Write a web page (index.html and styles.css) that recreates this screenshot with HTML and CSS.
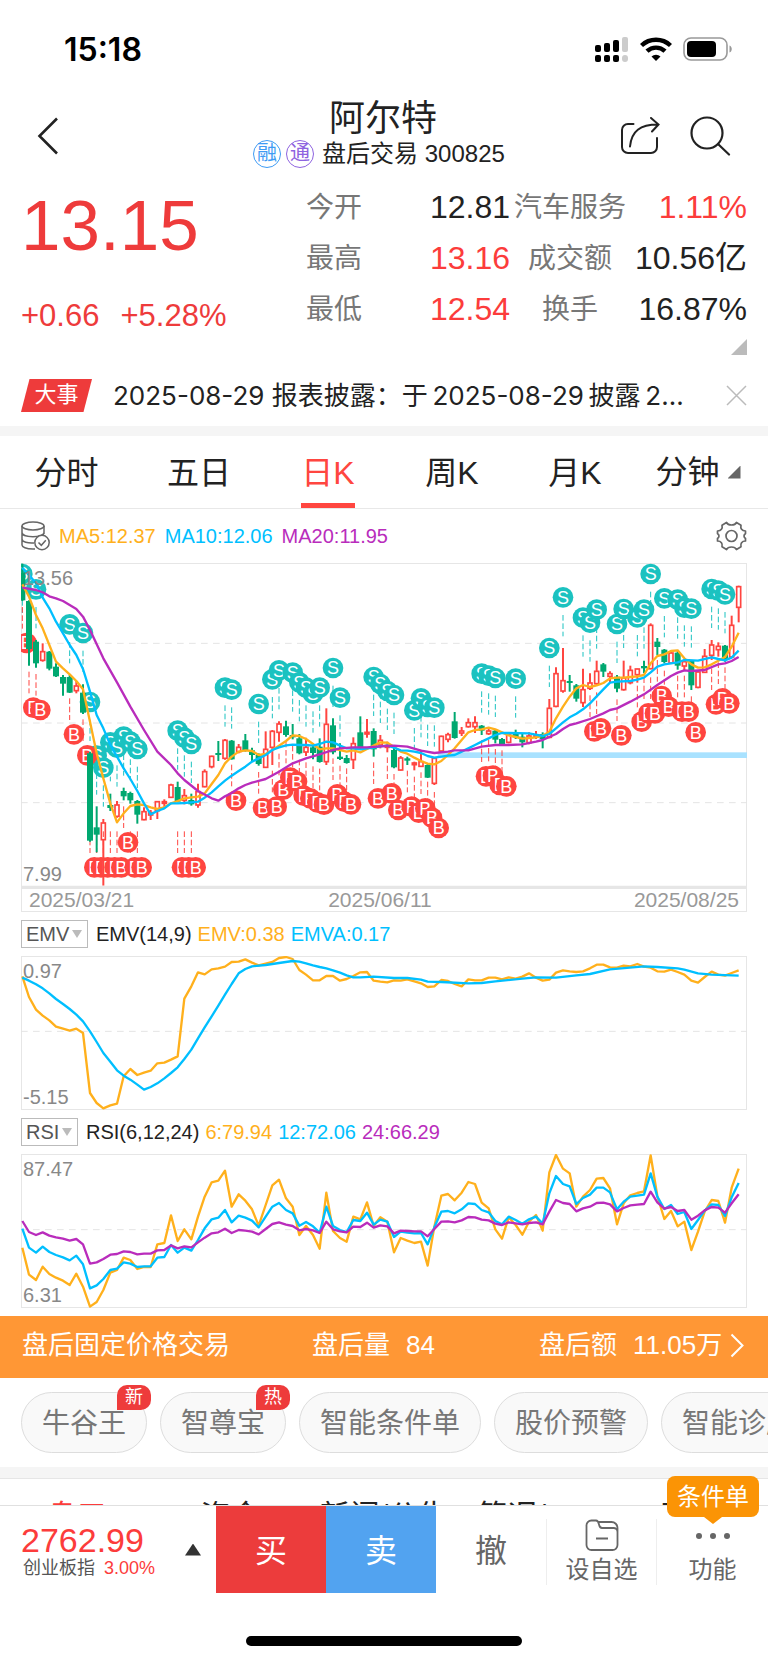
FILE: index.html
```
<!doctype html>
<html lang="zh-CN">
<head>
    <meta charset="utf-8">
    <meta name="viewport" content="width=device-width, initial-scale=1">
    <link rel="stylesheet" href="styles.css">
    <title>阿尔特 300825</title>
</head>
<body>
<div class="status">
    <span class="clock">15:18</span>
    <div class="status-icons">
        <svg width="34" height="25" viewBox="0 0 34 25">
            <rect x="0" y="8" width="6" height="7" rx="2"/>
            <rect x="9" y="6" width="6" height="9" rx="2"/>
            <rect x="18" y="3" width="6" height="12" rx="2"/>
            <rect x="27" y="0" width="6" height="15" rx="2" fill="#ccc"/>
            <rect x="0" y="18" width="6" height="7" rx="2"/>
            <rect x="9" y="18" width="6" height="7" rx="2"/>
            <rect x="18" y="18" width="6" height="7" rx="2"/>
            <rect x="27" y="18" width="6" height="7" rx="3" fill="#ccc"/>
        </svg>
        <svg width="32" height="24" viewBox="0 0 32 24">
            <path d="M1.500 8.500a21 21 0 0 1 29 0M7 14.200a13 13 0 0 1 18 0" fill="none" stroke="#000" stroke-width="4.400"/>
            <path d="M16 24l-4.500-4.500a6.500 6.500 0 0 1 9 0z"/>
        </svg>
        <svg width="50" height="24" viewBox="0 0 50 24">
            <rect x="1" y="1" width="43" height="22" rx="7" fill="none" stroke="#999" stroke-width="1.600"/>
            <rect x="4" y="4" width="29" height="16" rx="4"/>
            <path d="M46.500 8.500c3 1 3 6 0 7z" fill="#999"/>
        </svg>
    </div>
</div>

<header class="header">
    <button type="button" class="icon-btn" aria-label="返回">
        <svg width="22" height="38" viewBox="0 0 22 38"><path d="M20 1.500L2.500 19 20 36.500" fill="none" stroke="#222" stroke-width="2.600"/></svg>
    </button>
    <div class="heading">
        <h1 class="name">阿尔特</h1>
        <p class="sub">
            <span class="mark mark-blue">融</span>
            <span class="mark mark-purple">通</span>
            <span class="session">盘后交易 300825</span>
        </p>
    </div>
    <div class="actions">
        <button type="button" class="icon-btn" aria-label="分享">
            <svg width="40" height="38" viewBox="0 0 40 38" fill="none" stroke="#222" stroke-width="2" stroke-linecap="round">
                <path d="M13.500 7H8a6 6 0 0 0-6 6v17a6 6 0 0 0 6 6h23a6 6 0 0 0 6-6v-9M10 29.500C11.500 14 20 7.500 38 7.500M31 1l7.500 6.500L32 14.500"/>
            </svg>
        </button>
        <button type="button" class="icon-btn" aria-label="搜索">
            <svg width="41" height="40" viewBox="0 0 41 40" fill="none" stroke="#222" stroke-width="2.200" stroke-linecap="round">
                <circle cx="17" cy="17" r="15.500"/><path d="M28 28l11 10.500"/>
            </svg>
        </button>
    </div>
</header>

<section class="quote">
    <div class="price">
        <strong class="last">13.15</strong>
        <p class="change"><span>+0.66</span><span>+5.28%</span></p>
    </div>
    <table class="stats">
        <tr><th>今开</th><td>12.81</td><th>汽车服务</th><td class="up">1.11%</td></tr>
        <tr><th>最高</th><td class="up">13.16</td><th>成交额</th><td>10.56亿</td></tr>
        <tr><th>最低</th><td class="up">12.54</td><th>换手</th><td>16.87%</td></tr>
    </table>
    <i class="more"></i>
</section>

<div class="news">
    <span class="news-tag">大事</span>
    <a class="news-text" href="#">2025-08-29 报表披露：于&thinsp;2025-08-29&thinsp;披露&thinsp;2...</a>
    <button type="button" class="icon-btn" aria-label="关闭">
        <svg width="21" height="21" viewBox="0 0 21 21"><path d="M1 1l19 19M20 1L1 20" stroke="#bbb" stroke-width="1.500"/></svg>
    </button>
</div>

<nav class="tabs">
    <a href="#">分时</a>
    <a href="#">五日</a>
    <a href="#" class="active">日K</a>
    <a href="#">周K</a>
    <a href="#">月K</a>
    <a href="#" class="with-arrow">分钟<i class="corner"></i></a>
</nav>

<main class="charts">
    <div class="legend legend-main">
        <svg class="db" width="29" height="30" viewBox="0 0 29 30" fill="none" stroke="#666" stroke-width="1.500">
            <ellipse cx="12" cy="5" rx="11" ry="4"/>
            <path d="M1 5v19c0 2 4 4 11 4h2M23 5v8M1 11.500c0 5.500 22 5.500 22 0M1 18c0 3 6 4.500 12 4M23 5v6"/>
            <circle cx="21" cy="21.500" r="7.200" fill="#fff"/>
            <path d="M17.500 21.500l2.800 2.800 4.500-5"/>
        </svg>
        <span class="c-yellow">MA5:12.37</span>
        <span class="c-blue">MA10:12.06</span>
        <span class="c-purple">MA20:11.95</span>
        <button type="button" class="icon-btn gear" aria-label="设置">
            <svg width="31" height="30" viewBox="0 0 31 30" fill="none" stroke="#666" stroke-width="1.700" stroke-linejoin="round">
                <path d="M10.500 1.500c1 2 2.500 2.500 5 2.500s4-.5 5-2.500l4.500 2.700c-.8 3.300.8 5.800 4.500 5.800v2.500c-2 1.500-2 3.500 0 5V20c-3.700 0-5.300 2.500-4.500 5.800l-4.500 2.700c-1-2-2.500-2.500-5-2.500s-4 .5-5 2.500L6 25.800C6.800 22.500 5.200 20 1.500 20v-2.500c2-1.500 2-3.500 0-5V10C5.200 10 6.800 7.500 6 4.200z"/>
                <circle cx="15.500" cy="15" r="5.500"/>
            </svg>
        </button>
    </div>
    <div class="plot">
        <svg id="kline" viewBox="0 24 2178 972"></svg>
        <span class="scale scale-top">13.56</span>
        <span class="scale scale-bottom">7.99</span>
    </div>
    <div class="dates"><span>2025/03/21</span><span>2025/06/11</span><span>2025/08/25</span></div>

    <div class="legend">
        <span class="picker">
            <select aria-label="指标一"><option>EMV</option></select>
            <i class="caret"></i>
        </span>
        <span>EMV(14,9)</span>
        <span class="c-yellow">EMV:0.38</span>
        <span class="c-blue">EMVA:0.17</span>
    </div>
    <div class="plot">
        <svg id="emv" viewBox="0 229 2178 462"></svg>
        <span class="scale scale-top">0.97</span>
        <span class="scale scale-bottom">-5.15</span>
    </div>

    <div class="legend">
        <span class="picker">
            <select aria-label="指标二"><option>RSI</option></select>
            <i class="caret"></i>
        </span>
        <span>RSI(6,12,24)</span>
        <span class="c-yellow">6:79.94</span>
        <span class="c-blue">12:72.06</span>
        <span class="c-purple">24:66.29</span>
    </div>
    <div class="plot">
        <svg id="rsi" viewBox="0 132 2178 462"></svg>
        <span class="scale scale-top">87.47</span>
        <span class="scale scale-bottom">6.31</span>
    </div>
</main>

<a class="after-hours" href="#">
    <span>盘后固定价格交易</span>
    <span class="pair"><span>盘后量</span><span>84</span></span>
    <span class="pair"><span>盘后额</span><span>11.05万</span>
        <svg width="14" height="25" viewBox="0 0 14 25"><path d="M1.500 1.500l11 11-11 11" fill="none" stroke="#fff" stroke-width="2"/></svg>
    </span>
</a>

<div class="chips">
    <button type="button" class="chip">牛谷王<span class="flag">新</span></button>
    <button type="button" class="chip">智尊宝<span class="flag">热</span></button>
    <button type="button" class="chip">智能条件单</button>
    <button type="button" class="chip">股价预警</button>
    <button type="button" class="chip">智能诊股</button>
</div>

<nav class="info-tabs">
    <a href="#" class="active">盘口</a>
    <a href="#">资金</a>
    <a href="#">新闻/公告</a>
    <a href="#">简况/F10</a>
    <a href="#">研报</a>
</nav>

<footer class="dock">
    <div class="index">
        <div>
            <strong class="index-value">2762.99</strong>
            <p class="index-name">创业板指 <span class="up">3.00%</span></p>
        </div>
        <i class="index-arrow"></i>
    </div>
    <button type="button" class="trade buy">买</button>
    <button type="button" class="trade sell">卖</button>
    <button type="button" class="trade cancel">撤</button>
    <button type="button" class="tool">
        <svg width="34" height="33" viewBox="0 0 34 33" fill="none" stroke="#666" stroke-width="1.800">
            <path d="M1.500 7v19a5 5 0 0 0 5 5h21a5 5 0 0 0 5-5V13a4 4 0 0 0-4-4H17c-2 0-2.500-1-3-3.500S13 1.500 11 1.500H6.500a5 5 0 0 0-5 5.500zM13 3h13.500a6 6 0 0 1 6 6v5M11 19.500h12"/>
        </svg>
        <span>设自选</span>
    </button>
    <button type="button" class="tool">
        <svg width="36" height="33" viewBox="0 0 36 33" fill="#666">
            <circle cx="4" cy="17" r="3"/><circle cx="18" cy="17" r="3"/><circle cx="32" cy="17" r="3"/>
        </svg>
        <span>功能</span>
        <span class="tip">条件单</span>
    </button>
</footer>
<div class="home"></div>
<script src="chart.js"></script>
</body>
</html>
```
FILE: styles.css
```
* {
    box-sizing: border-box;
}

body {
    margin: 0;
    background-color: #fff;
    color: #222;
    font-family: "Liberation Sans", "Noto Sans CJK SC", sans-serif;
    font-size: 20px;
    overflow-x: hidden;
}

h1, p {
    margin: 0;
    font-weight: inherit;
}

a {
    color: inherit;
    text-decoration: none;
}

button, select {
    font: inherit;
    color: inherit;
    border: none;
    background: none;
    padding: 0;
    margin: 0;
}

svg {
    display: block;
    flex: none;
}

.up {
    color: #fc3c3b;
}

.c-yellow {
    color: #ffb01c;
}

.c-blue {
    color: #00bfff;
}

.c-purple {
    color: #b92cbc;
}

/* status bar */

.status {
    display: flex;
    justify-content: space-between;
    align-items: center;
    height: 96px;
    padding: 2px 35px 0 64px;
}

.clock {
    font-family: Inter, sans-serif;
    font-size: 32px;
    font-weight: 600;
    color: #000;
}

.status-icons {
    display: flex;
    align-items: center;
    gap: 11px;
}

/* header */

.header {
    display: grid;
    grid-template-columns: 1fr auto 1fr;
    align-items: center;
    height: 80px;
    padding: 0 37px;
}

.icon-btn {
    display: block;
}

.heading {
    display: flex;
    flex-direction: column;
    align-items: center;
    margin-right: 10px;
}

.name {
    padding-left: 8px;
    font-size: 36px;
    line-height: 38px;
}

.sub {
    display: flex;
    align-items: center;
    gap: 5px;
    height: 34px;
    padding-bottom: 2px;
    font-size: 24px;
    line-height: 32px;
}

.mark {
    width: 28px;
    height: 28px;
    border: 1px solid;
    border-radius: 14px;
    font-size: 20px;
    line-height: 25px;
    text-align: center;
}

.mark-blue {
    color: #3e9bf4;
}

.mark-purple {
    color: #8e63e0;
}

.session {
    margin-left: 3px;
}

.actions {
    display: flex;
    align-items: center;
    justify-content: flex-end;
    gap: 30px;
}

/* quote */

.quote {
    position: relative;
    display: flex;
    justify-content: space-between;
    height: 190px;
    padding: 6px 21px 0;
}

.last {
    display: block;
    padding-top: 4px;
    font-size: 71px;
    font-weight: 400;
    line-height: 80px;
    color: #ee3b3b;
}

.change {
    display: flex;
    gap: 21px;
    padding-top: 33px;
    font-size: 31px;
    line-height: 34px;
    color: #ee3b3b;
}

.stats {
    width: 441px;
    height: 153px;
    border-collapse: collapse;
    table-layout: fixed;
}

.stats th, .stats td {
    padding: 0;
    height: 51px;
    line-height: 51px;
    white-space: nowrap;
}

.stats th {
    width: 120px;
    font-size: 28px;
    font-weight: 400;
    color: #777;
}

.stats th:first-child {
    width: 110px;
    text-align: left;
}

.stats td {
    font-size: 32px;
    text-align: right;
}

.stats td:nth-child(2) {
    width: 94px;
}

.more {
    position: absolute;
    right: 21px;
    bottom: 11px;
    width: 16px;
    height: 16px;
    background-color: #bbb;
    clip-path: polygon(100% 0, 100% 100%, 0 100%);
}

/* news */

.news {
    display: flex;
    align-items: center;
    height: 70px;
    padding: 0 21px 1px;
    border-bottom: 10px solid #f5f5f5;
}

.news-tag {
    flex: none;
    width: 71px;
    height: 33px;
    background-color: #ee3b3b;
    clip-path: polygon(12% 0, 100% 0, 88% 100%, 0 100%);
    color: #fff;
    font-size: 22px;
    line-height: 32px;
    text-align: center;
}

.news-text {
    flex: 1;
    margin: 0 22px 0 21px;
    font-family: Inter, "Noto Sans CJK SC", sans-serif;
    font-size: 26px;
    line-height: 36px;
    overflow: hidden;
    white-space: nowrap;
}

/* period tabs */

.tabs {
    display: grid;
    grid-template-columns: 133fr 132fr 126fr 122fr 124fr 131fr;
    justify-items: center;
    height: 73px;
    border-bottom: 1px solid #e8e8e8;
    font-size: 32px;
    line-height: 74px;
}

.tabs a {
    height: 72px;
}

.tabs .active {
    color: #ff4640;
    box-shadow: inset 0 -5px #ff4640;
}

.with-arrow {
    display: flex;
    align-items: center;
    gap: 8px;
    padding-right: 9px;
}

.corner {
    width: 13px;
    height: 13px;
    background-color: #666;
    clip-path: polygon(100% 0, 100% 100%, 0 100%);
}

/* charts */

.charts {
    padding: 0 21px 8px;
}

.legend {
    display: flex;
    align-items: center;
    gap: 6px;
    height: 44px;
    line-height: 24px;
}

.legend-main {
    gap: 9px;
    height: 54px;
}

.gear {
    margin-left: auto;
}

.plot {
    position: relative;
    box-shadow: inset 0 0 0 1px #e6e6e6;
}

.plot svg {
    width: 100%;
    height: auto;
}

.scale {
    position: absolute;
    left: 2px;
    color: #888;
    line-height: 24px;
}

.scale-top {
    top: 3px;
}

.scale-bottom {
    bottom: 1px;
}

.dates {
    display: grid;
    grid-template-columns: 300fr 112fr 300fr;
    padding: 0 7px;
    border: 1px solid #e6e6e6;
    border-top-width: 2px;
    font-size: 21px;
    line-height: 22px;
    color: #999;
}

.dates span:last-child {
    text-align: right;
}

.picker {
    position: relative;
    margin-right: 2px;
    border: 1px solid #bbb;
    color: #555;
}

.picker select {
    display: block;
    appearance: none;
    height: 26px;
    padding: 0 17px 0 4px;
    line-height: 26px;
}

.caret {
    position: absolute;
    right: 5px;
    top: 9px;
    width: 10px;
    height: 8px;
    background-color: #bbb;
    clip-path: polygon(0 0, 100% 0, 50% 100%);
    pointer-events: none;
}

.line {
    fill: none;
    stroke-width: 7;
    stroke-linejoin: round;
}

.grid-line {
    stroke: #e4e4e4;
    stroke-width: 3;
    stroke-dasharray: 20 16;
}

.letter {
    fill: #fff;
    font-size: 54px;
    text-anchor: middle;
}

/* after-hours bar */

.after-hours {
    display: grid;
    grid-template-columns: 290fr 227fr 208fr;
    align-items: center;
    height: 62px;
    padding: 0 21px 4px 22px;
    background-color: #ff9735;
    color: #fff;
    font-size: 26px;
    line-height: 36px;
    white-space: nowrap;
}

.pair {
    display: flex;
    align-items: center;
    gap: 16px;
}

.pair svg {
    margin-left: -8px;
}

/* chips */

.chips {
    display: flex;
    gap: 13px;
    padding: 14px 21px;
    border-bottom: 11px solid #f5f5f5;
    overflow: hidden;
}

.chip {
    position: relative;
    flex: none;
    height: 61px;
    padding: 0 20px 3px;
    border: 1px solid #ddd;
    border-radius: 31px;
    background-color: #f9f9f9;
    color: #777;
    font-size: 28px;
}

.flag {
    position: absolute;
    top: -8px;
    right: -5px;
    width: 34px;
    height: 25px;
    border-radius: 10px 10px 10px 0;
    background-color: #ee3b3b;
    color: #fff;
    font-size: 18px;
    line-height: 25px;
}

/* lower tab strip, cut off by the dock */

.info-tabs {
    display: grid;
    grid-template-columns: repeat(5, 1fr);
    justify-items: center;
    height: 27px;
    padding-top: 19px;
    border-top: 1px solid #e6e6e6;
    overflow: hidden;
    font-size: 30px;
    line-height: 36px;
    white-space: nowrap;
}

.info-tabs .active {
    color: #fc3c3b;
}

/* dock */

.dock {
    display: grid;
    grid-template-columns: 216fr 110fr 110fr 110fr 110fr 112fr;
    height: 88px;
    border-top: 1px solid #e0e0e0;
}

.index {
    display: flex;
    justify-content: space-between;
    align-items: center;
    padding: 0 15px 0 21px;
}

.index-value {
    display: block;
    padding-top: 2px;
    font-size: 34px;
    font-weight: 400;
    line-height: 34px;
    color: #fc3c3b;
}

.index-name {
    padding-left: 2px;
    font-size: 18px;
    line-height: 22px;
    color: #555;
}

.index-name .up {
    margin-left: 4px;
}

.index-arrow {
    width: 16px;
    height: 12px;
    background-color: #333;
    clip-path: polygon(50% 0, 100% 100%, 0 100%);
}

.trade {
    padding-bottom: 4px;
    font-size: 32px;
}

.buy {
    background-color: #ec3c3c;
    color: #fff;
}

.sell {
    background-color: #52a3f0;
    color: #fff;
}

.cancel {
    color: #666;
}

.tool {
    position: relative;
    display: flex;
    flex-direction: column;
    align-items: center;
    gap: 4px;
    margin: 13px 0 8px;
    border-left: 1px solid #eee;
    color: #666;
    font-size: 24px;
    line-height: 28px;
}

.tip {
    position: absolute;
    top: -43px;
    right: 9px;
    padding: 0 10px;
    border-radius: 8px;
    background-color: #fb9405;
    color: #fff;
    line-height: 41px;
    white-space: nowrap;
}

.tip::after {
    content: "";
    position: absolute;
    left: 50%;
    top: 100%;
    margin-left: -9px;
    border: 9px solid transparent;
    border-top: 7px solid #fb9405;
    border-bottom: none;
}

.home {
    width: 36%;
    height: 10px;
    margin: 43px auto 17px;
    border-radius: 5px;
    background-color: #000;
}
```
FILE: chart.js
```
const STEP = 20.27;
const X0 = 4;
const COLORS = { yellow: '#ffb01c', blue: '#00bfff', purple: '#b92cbc', up: '#ff4540', down: '#00a870', sell: '#1bc2c0' };

// high, body top, body bottom, low, direction (1 up, 0 down)
const candles = [
    [26,52,136,138,0],[136,138,282,332,0],[255,260,325,338,0],[265,290,316,320,1],[288,290,341,346,0],
    [325,335,364,366,0],[360,366,386,422,0],[360,366,413,414,0],[378,393,407,415,1],[388,413,473,477,0],
    [590,595,857,860,0],[754,817,839,892,0],[792,804,854,992,1],[716,750,759,768,0],[738,750,784,788,1],
    [698,708,724,736,0],[710,714,736,746,0],[735,738,779,806,0],[757,770,794,796,1],[765,773,780,795,1],
    [738,740,767,792,1],[733,740,745,758,1],[686,690,727,729,1],[680,696,740,742,0],[702,722,736,748,1],
    [716,735,748,752,0],[686,710,750,758,1],[643,650,695,697,1],[602,604,635,640,1],[558,594,600,618,0],
    [552,556,610,614,1],[555,557,613,614,0],[567,577,590,595,1],[537,556,586,590,0],[578,586,600,618,0],
    [595,600,627,632,0],[529,583,637,638,1],[525,529,577,630,1],[499,507,532,560,1],[497,514,540,545,0],
    [507,540,547,553,0],[537,550,595,598,0],[548,577,591,603,1],[565,577,594,613,0],[550,575,621,623,0],
    [460,508,620,630,1],[490,511,592,598,0],[565,605,612,615,0],[600,609,624,626,0],[547,566,614,642,1],
    [484,532,582,585,0],[492,532,537,548,1],[520,528,583,605,0],[540,556,570,580,1],[560,571,577,592,1],
    [578,585,637,640,0],[603,609,645,647,1],[605,610,617,630,0],[620,624,629,646,1],[584,620,634,636,1],
    [625,630,668,669,0],[608,610,685,690,1],[542,544,588,590,1],[533,539,553,562,1],[471,499,549,551,0],
    [516,528,534,543,1],[490,503,515,518,1],[484,503,515,534,1],[510,512,527,540,0],[520,528,536,540,1],
    [522,527,554,565,0],[549,552,567,570,0],[538,540,562,565,1],[524,534,547,552,0],[535,545,562,577,0],
    [532,543,563,568,1],[528,540,546,552,1],[532,537,552,580,0],[432,460,547,550,1],[337,356,454,457,1],
    [279,377,408,413,1],[360,378,384,410,0],[387,391,431,440,0],[341,404,443,456,1],[355,384,400,405,1],
    [317,349,386,390,1],[324,328,350,366,0],[349,356,364,384,1],[360,365,401,412,0],[317,369,404,407,1],
    [332,346,383,388,1],[341,342,359,383,1],[317,333,340,355,0],[205,211,341,343,1],[249,260,276,300,0],
    [282,284,321,325,0],[286,294,324,327,1],[288,293,332,344,0],[312,320,333,346,1],[315,318,391,405,0],
    [345,351,397,400,1],[282,304,352,354,1],[255,270,301,315,1],[262,274,284,305,1],[270,272,314,320,0],
    [182,211,306,308,1],[92,95,157,202,1]
];

// index, y
const sells = [
    [0,57],[2,103],[7,208],[9,234],[10,441],[13,562],[14,578],[11,602],[12,638],[15,545],[16,560],[17,582],
    [23,527],[24,548],[25,567],[30,398],[31,404],[35,447],[37,373],[38,346],[40,353],[41,382],[42,398],
    [43,416],[44,398],[46,339],[47,428],[52,366],[53,387],[54,408],[55,420],[58,466],[59,430],[60,456],
    [61,458],[68,356],[69,362],[70,369],[73,371],[78,279],[80,127],[83,188],[84,203],[85,164],[88,207],
    [89,162],[91,187],[92,164],[93,57],[95,130],[97,134],[98,158],[99,161],[102,102],[103,107],[104,118]
];
const buys = [
    [0,264],[1,458],[2,465],[7,538],[9,601],[10,937],[11,937],[12,937],[13,937],[14,937],[15,862],[16,937],
    [17,937],[23,937],[24,937],[25,937],[31,737],[35,759],[37,755],[38,704],[39,668],[40,680],[41,722],
    [42,730],[43,742],[44,749],[46,718],[47,740],[48,748],[52,730],[54,715],[55,765],[57,755],[58,773],
    [59,760],[60,788],[61,819],[68,664],[69,662],[70,690],[71,694],[84,529],[85,520],[88,541],[91,500],
    [92,475],[93,475],[94,423],[95,455],[97,470],[98,470],[99,532],[102,448],[103,430],[104,445]
];

const ma5 = [[0,88],[1,125],[2,180],[3,220],[4,270],[5,320],[6,340],[7,358],[8,378],[9,403],[10,500],[11,595],[12,670],[13,745],[14,802],[15,775],[16,753],[17,748],[18,750],[19,757],[20,762],[21,757],[22,745],[23,738],[24,730],[25,727],[26,725],[27,715],[28,687],[29,660],[30,625],[31,605],[32,590],[33,586],[34,588],[35,600],[36,597],[37,585],[38,572],[39,558],[40,541],[41,543],[42,552],[43,567],[44,583],[45,580],[46,580],[47,585],[48,590],[49,586],[50,592],[51,582],[52,572],[53,562],[54,563],[55,575],[56,590],[57,596],[58,608],[59,618],[60,626],[61,628],[62,618],[63,600],[64,580],[65,555],[66,532],[67,525],[68,523],[69,518],[70,523],[71,532],[72,541],[73,546],[74,551],[75,549],[76,547],[77,542],[78,530],[79,490],[80,455],[81,425],[82,400],[83,390],[84,396],[85,391],[86,384],[87,370],[88,368],[89,368],[90,366],[91,364],[92,360],[93,325],[94,303],[95,298],[96,288],[97,286],[98,310],[99,328],[100,338],[101,337],[102,328],[103,317],[104,306],[105,275],[106,233]];
const ma10 = [[0,38],[1,60],[2,85],[3,128],[4,160],[5,200],[6,235],[7,270],[8,300],[9,342],[10,410],[11,480],[12,520],[13,570],[14,605],[15,640],[16,672],[17,708],[18,745],[19,778],[20,768],[21,760],[22,745],[23,745],[24,744],[25,742],[26,740],[27,728],[28,712],[29,694],[30,677],[31,662],[32,648],[33,635],[34,620],[35,610],[36,600],[37,585],[38,577],[39,571],[40,569],[41,570],[42,570],[43,572],[44,567],[45,560],[46,562],[47,572],[48,580],[49,580],[50,583],[51,580],[52,578],[53,574],[54,572],[55,578],[56,586],[57,587],[58,590],[59,594],[60,603],[61,608],[62,605],[63,602],[64,600],[65,590],[66,580],[67,570],[68,560],[69,550],[70,540],[71,534],[72,534],[75,535],[77,543],[78,537],[79,520],[80,502],[81,487],[82,476],[83,463],[84,445],[85,424],[86,403],[87,383],[88,380],[90,378],[91,374],[92,368],[93,352],[94,335],[95,328],[97,322],[98,315],[100,317],[102,307],[103,312],[104,316],[105,308],[106,287]];
const ma20 = [[0,98],[2,105],[3,112],[4,124],[5,130],[6,138],[7,150],[8,162],[9,185],[10,225],[12,310],[14,382],[16,455],[18,525],[20,590],[22,630],[23,655],[24,675],[26,708],[28,730],[29,737],[30,724],[31,714],[32,700],[33,690],[34,683],[36,672],[38,650],[40,625],[42,610],[44,598],[46,585],[47,580],[49,577],[51,577],[53,574],[55,572],[57,575],[59,587],[61,594],[63,590],[64,586],[66,586],[68,575],[70,570],[72,570],[74,568],[76,560],[77,555],[79,537],[80,522],[81,510],[82,505],[84,492],[86,475],[87,465],[88,460],[90,440],[92,418],[94,390],[96,363],[97,353],[98,346],[99,348],[101,345],[103,328],[104,325],[105,318],[106,306]];

const emv = [290,352,390,408,422,441,447,453,447,460,640,670,686,677,672,590,568,586,579,573,551,549,540,530,357,320,278,284,269,266,261,247,246,239,249,257,252,247,235,232,238,271,285,302,302,289,289,303,298,289,278,277,303,306,308,302,303,299,305,311,322,320,301,304,313,320,299,302,302,294,294,299,293,297,291,281,294,303,300,279,272,275,277,275,266,255,255,263,264,258,260,253,261,264,275,276,270,277,285,303,309,292,276,285,288,280,272];
const emva = [[0,294],[1,303],[2,314],[3,326],[4,341],[5,358],[6,373],[7,388],[8,405],[9,425],[10,455],[11,487],[12,520],[13,546],[14,572],[15,588],[16,600],[17,615],[18,630],[19,622],[20,611],[21,596],[22,580],[23,563],[24,538],[25,510],[26,476],[27,443],[28,410],[29,378],[30,345],[31,313],[32,281],[33,268],[34,260],[36,256],[38,250],[40,244],[41,246],[42,251],[43,257],[44,262],[45,266],[46,272],[47,279],[48,287],[49,293],[50,293],[52,291],[55,295],[57,295],[59,300],[60,306],[62,307],[66,311],[68,310],[70,305],[74,297],[76,293],[79,294],[82,287],[84,283],[87,269],[92,260],[94,262],[97,266],[98,270],[100,281],[102,285],[106,288]];

const rsi6 = [413,494,510,470,492,503,512,525,491,530,590,576,540,488,480,443,450,477,471,471,403,399,316,393,358,388,320,260,217,212,182,290,253,272,298,347,285,226,209,265,290,375,348,375,416,248,363,384,395,320,328,277,348,322,335,427,384,392,399,395,467,350,257,252,271,248,216,222,278,295,358,386,322,345,374,335,315,362,187,135,176,190,290,260,240,206,204,235,343,280,256,249,244,136,258,327,303,349,335,420,365,305,270,273,338,233,176];
const rsi12 = [356,413,428,410,426,435,442,451,437,463,535,526,507,480,476,457,461,471,469,469,443,441,405,428,413,422,390,355,328,323,300,337,317,323,332,352,320,290,279,300,310,347,336,349,368,290,348,360,366,330,333,308,344,329,335,381,365,368,370,369,403,352,305,303,310,298,280,282,300,307,333,343,320,330,341,328,320,341,250,198,222,229,282,264,254,233,233,247,298,275,260,257,254,190,260,297,285,312,306,357,330,302,283,285,318,262,219];
const rsi24 = [333,366,375,367,377,382,386,392,387,403,461,457,447,434,432,424,426,433,431,431,421,420,406,415,409,412,397,383,370,367,356,369,360,362,365,373,357,342,337,344,348,361,357,361,369,335,358,364,367,350,351,338,353,346,349,370,362,363,364,364,379,357,335,334,337,331,321,322,329,331,341,345,337,340,343,339,337,343,305,270,279,282,304,295,290,279,278,283,304,294,286,284,282,245,277,296,291,303,300,329,317,301,291,293,308,280,253];

function add(parent, tag, attrs, text) {
    const node = document.createElementNS('http://www.w3.org/2000/svg', tag);
    for (const key in attrs) node.setAttribute(key, attrs[key]);
    if (text) node.textContent = text;
    parent.appendChild(node);
}

function x(i) {
    return Math.round(X0 + i * STEP);
}

function gridLine(svg, y) {
    add(svg, 'line', { x1: 0, x2: 2178, y1: y, y2: y, class: 'grid-line' });
}

function line(svg, data, color) {
    const points = data.map((d, i) => Array.isArray(d) ? x(d[0]) + ',' + d[1] : x(i) + ',' + d);
    add(svg, 'polyline', { points: points.join(' '), class: 'line', stroke: color });
}

function dash(svg, cx, from, to, color) {
    add(svg, 'line', { x1: cx, x2: cx, y1: from, y2: to, stroke: color, 'stroke-width': 3, 'stroke-dasharray': '17 8' });
}

function marker(svg, cx, y, letter, color) {
    add(svg, 'circle', { cx: cx, cy: y, r: 31, fill: color });
    add(svg, 'text', { x: cx, y: y + 19, class: 'letter' }, letter);
}

const kline = document.querySelector('#kline');
[265, 504, 743].forEach(y => gridLine(kline, y));
add(kline, 'rect', { x: 1250, y: 592, width: 928, height: 17, fill: '#a9e2ff' });
sells.forEach(([i, y]) => dash(kline, x(i), y + 53, y + 117, COLORS.sell));
buys.forEach(([i, y]) => dash(kline, x(i), y - 108, y - 43, COLORS.up));
sells.forEach(([i, y]) => marker(kline, x(i), y, 'S', COLORS.sell));
buys.forEach(([i, y]) => marker(kline, x(i) + 13, y, 'B', COLORS.up));
candles.forEach(([high, top, bottom, low, up], i) => {
    const cx = x(i);
    const color = up ? COLORS.up : COLORS.down;
    add(kline, 'line', { x1: cx, x2: cx, y1: high, y2: up ? top : low, stroke: color, 'stroke-width': 6 });
    if (up) {
        add(kline, 'line', { x1: cx, x2: cx, y1: bottom, y2: low, stroke: color, 'stroke-width': 6 });
        add(kline, 'rect', { x: cx - 6, y: top, width: 12, height: bottom - top, fill: 'none', stroke: color, 'stroke-width': 5 });
    } else {
        add(kline, 'rect', { x: cx - 9, y: top, width: 18, height: bottom - top, fill: color });
    }
});
line(kline, ma5, COLORS.yellow);
line(kline, ma10, COLORS.blue);
line(kline, ma20, COLORS.purple);
// frame edge under the price pane
add(kline, 'line', { x1: 0, x2: 2178, y1: 994, y2: 994, stroke: '#e6e6e6', 'stroke-width': 4 });

const emvPlot = document.querySelector('#emv');
gridLine(emvPlot, 455);
line(emvPlot, emv, COLORS.yellow);
line(emvPlot, emva, COLORS.blue);

const rsiPlot = document.querySelector('#rsi');
gridLine(rsiPlot, 359);
line(rsiPlot, rsi6, COLORS.yellow);
line(rsiPlot, rsi12, COLORS.blue);
line(rsiPlot, rsi24, COLORS.purple);
```
